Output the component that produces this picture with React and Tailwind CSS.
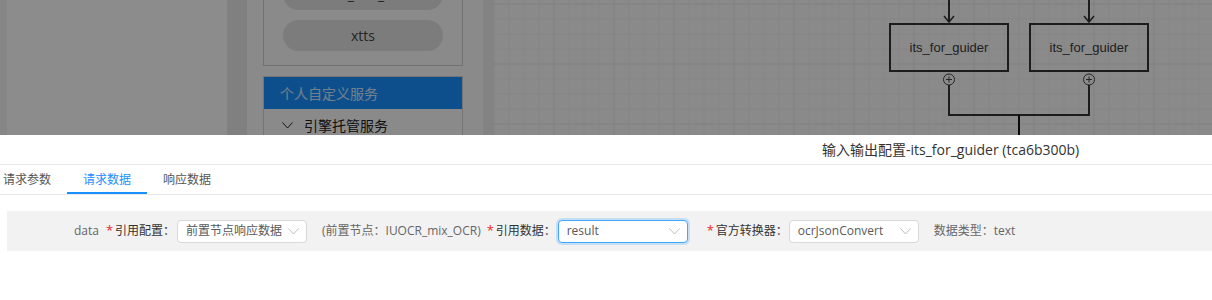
import React from "react";

const FONT = "font-['Open_Sans','Noto_Sans_CJK_SC',sans-serif]";

function Chevron({ className = "" }) {
  return (
    <svg width="11" height="7" viewBox="0 0 11 7" className={className}>
      <polyline points="0.5,0.5 5.5,6 10.5,0.5" fill="none" stroke="currentColor" strokeWidth="1" />
    </svg>
  );
}

function FlowCanvas() {
  const nodes = [456, 596];
  return (
    <svg width="719" height="135" className="block">
      <defs>
        <pattern id="minor" width="15" height="15" patternUnits="userSpaceOnUse" x="0.5" y="3.5">
          <path d="M15 0H0V15" fill="none" stroke="#eeeeee" strokeWidth="1" />
        </pattern>
        <pattern id="major" width="60" height="60" patternUnits="userSpaceOnUse" x="0.5" y="3.5">
          <path d="M60 0H0V60" fill="none" stroke="#e0e0e0" strokeWidth="1" />
        </pattern>
      </defs>
      <rect width="719" height="135" fill="#fbfbfb" />
      <rect width="719" height="135" fill="url(#minor)" />
      <rect width="719" height="135" fill="url(#major)" />

      {nodes.map((cx) => (
        <g key={cx}>
          <line x1={cx} y1="0" x2={cx} y2="22" stroke="#333" strokeWidth="2" />
          <polyline points={`${cx - 5},16 ${cx},22 ${cx + 5},16`} fill="none" stroke="#333" strokeWidth="1.5" />
          <rect x={cx - 59} y="24" width="118" height="47" fill="none" stroke="#333" strokeWidth="2" />
          <text
            x={cx}
            y="52"
            textAnchor="middle"
            fontFamily="Liberation Sans, Arial, sans-serif"
            fontSize="13"
            fill="#3a3a3a"
          >
            its_for_guider
          </text>
          <circle cx={cx} cy="79.5" r="5.5" fill="#fbfbfb" stroke="#444" strokeWidth="1" />
          <line x1={cx - 3} y1="79.5" x2={cx + 3} y2="79.5" stroke="#444" strokeWidth="1" />
          <line x1={cx} y1="76.5" x2={cx} y2="82.5" stroke="#444" strokeWidth="1" />
          <line x1={cx} y1="85" x2={cx} y2="116" stroke="#333" strokeWidth="2" />
        </g>
      ))}
      <line x1="455" y1="115" x2="597" y2="115" stroke="#333" strokeWidth="2" />
      <line x1="526" y1="115" x2="526" y2="135" stroke="#111" strokeWidth="2" />
    </svg>
  );
}

function Sidebar() {
  return (
    <aside className="w-[236px] shrink-0 bg-[#fbfbfb] pl-4 pr-5">
      <div className="-mt-[36px] flex flex-col gap-[10px] border border-[#cfcfcf] px-[19px] py-[14px]">
        {["ocr_xtts_v2", "xtts"].map((name) => (
          <div
            key={name}
            className="flex h-[31px] items-center justify-center rounded-full bg-[#e2e2e2] text-[14px] text-[#444]"
          >
            {name}
          </div>
        ))}
      </div>
      <div className="mt-[10px] border border-[#d4d4d4]">
        <div className="flex h-[32px] items-center bg-[#1890ff] pl-4 text-[14px] text-white/80">
          个人自定义服务
        </div>
        <div className="flex h-[32px] items-center pl-[18px] text-[14px] text-[#222]">
          <Chevron className="mr-[11px] text-[#222]" />
          引擎托管服务
        </div>
      </div>
    </aside>
  );
}

function Select({ value, focused }) {
  return (
    <div
      className={
        focused
          ? "flex h-[23px] w-[130px] items-center justify-between rounded-[4px] border border-[#40a9ff] bg-white pl-2 pr-[7px] text-[#595959] shadow-[0_0_0_2px_rgba(24,144,255,0.2)]"
          : "flex h-[23px] w-[130px] items-center justify-between rounded-[4px] border border-[#d9d9d9] bg-white pl-2 pr-[7px] text-[#595959]"
      }
    >
      <span className="truncate">{value}</span>
      <Chevron className="text-[#bfbfbf]" />
    </div>
  );
}

function Req({ children }) {
  return (
    <>
      <span className="inline-block w-[9px] text-[13px] text-[#f5222d]">*</span>
      <span className="text-[#333]">{children}</span>
    </>
  );
}

export default function App() {
  return (
    <div className={`h-[300px] w-[1212px] overflow-hidden bg-white ${FONT}`}>
      <div className="relative flex h-[135px] overflow-hidden">
        <div className="w-[7px] shrink-0 bg-[#f4f4f4]" />
        <div className="w-[220px] shrink-0 bg-white" />
        <div className="w-[20px] shrink-0 bg-[#e9e9e9]" />
        <Sidebar />
        <div className="w-[10px] shrink-0 bg-[#efefef]" />
        <div className="flex-1">
          <FlowCanvas />
        </div>
        <div className="absolute inset-0 bg-black/45" />
      </div>

      <div className="flex h-[30px] items-center border-b border-[#e8e8e8] pl-[822px] text-[14px] text-[#333]">
        输入输出配置-its_for_guider (tca6b300b)
      </div>

      <div className="flex h-[30px] border-b border-[#e8e8e8] text-[12px]">
        <div className="-ml-[13px] flex w-[80px] items-center justify-center text-[#555]">请求参数</div>
        <div className="flex w-[80px] items-center justify-center border-b-2 border-[#1890ff] pt-[2px] text-[#1890ff]">
          请求数据
        </div>
        <div className="flex w-[80px] items-center justify-center text-[#555]">响应数据</div>
      </div>

      <div className="ml-[7px] mt-4 flex h-[40px] items-center bg-[#f2f2f2] pl-[67px] text-[12px]">
        <span className="mr-[7px] text-[#666]">data</span>
        <Req>引用配置：</Req>
        <div className="ml-[2px]">
          <Select value="前置节点响应数据" />
        </div>
        <span className="ml-[15px] text-[#666]">(前置节点：IUOCR_mix_OCR)</span>
        <div className="ml-[6px] flex items-center">
          <Req>引用数据：</Req>
        </div>
        <div className="ml-[2px]">
          <Select value="result" focused />
        </div>
        <div className="ml-[19px] flex items-center">
          <Req>官方转换器：</Req>
        </div>
        <div className="ml-[1px]">
          <Select value="ocrJsonConvert" />
        </div>
        <span className="ml-[15px] text-[#666]">数据类型：text</span>
      </div>
    </div>
  );
}
